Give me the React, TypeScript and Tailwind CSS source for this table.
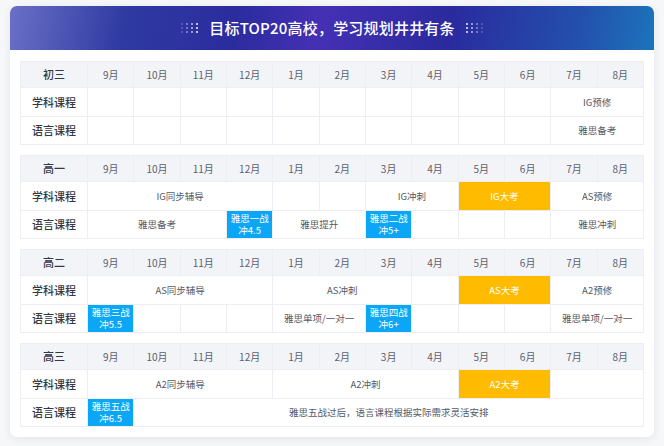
type Cell = { span: number; text?: string; kind?: "blue" | "orange" }

type Block = {
  grade: string
  subject: Cell[]
  language: Cell[]
}

const months = ["9月", "10月", "11月", "12月", "1月", "2月", "3月", "4月", "5月", "6月", "7月", "8月"]

const empty = (n: number): Cell[] => Array.from({ length: n }, () => ({ span: 1 }))

const blocks: Block[] = [
  {
    grade: "初三",
    subject: [...empty(10), { span: 2, text: "IG预修" }],
    language: [...empty(10), { span: 2, text: "雅思备考" }],
  },
  {
    grade: "高一",
    subject: [
      { span: 4, text: "IG同步辅导" },
      ...empty(2),
      { span: 2, text: "IG冲刺" },
      { span: 2, text: "IG大考", kind: "orange" },
      { span: 2, text: "AS预修" },
    ],
    language: [
      { span: 3, text: "雅思备考" },
      { span: 1, text: "雅思一战\n冲4.5", kind: "blue" },
      { span: 2, text: "雅思提升" },
      { span: 1, text: "雅思二战\n冲5+", kind: "blue" },
      ...empty(3),
      { span: 2, text: "雅思冲刺" },
    ],
  },
  {
    grade: "高二",
    subject: [
      { span: 4, text: "AS同步辅导" },
      { span: 3, text: "AS冲刺" },
      ...empty(1),
      { span: 2, text: "AS大考", kind: "orange" },
      { span: 2, text: "A2预修" },
    ],
    language: [
      { span: 1, text: "雅思三战\n冲5.5", kind: "blue" },
      ...empty(3),
      { span: 2, text: "雅思单项/一对一" },
      { span: 1, text: "雅思四战\n冲6+", kind: "blue" },
      ...empty(3),
      { span: 2, text: "雅思单项/一对一" },
    ],
  },
  {
    grade: "高三",
    subject: [
      { span: 4, text: "A2同步辅导" },
      { span: 4, text: "A2冲刺" },
      { span: 2, text: "A2大考", kind: "orange" },
      { span: 2 },
    ],
    language: [
      { span: 1, text: "雅思五战\n冲6.5", kind: "blue" },
      { span: 11, text: "雅思五战过后，语言课程根据实际需求灵活安排" },
    ],
  },
]

const Dots = ({ fade }: { fade: "left" | "right" }) => {
  const cols = fade === "left" ? [0.25, 0.45, 0.7, 0.95] : [0.95, 0.7, 0.45, 0.25]
  return (
    <div className="grid grid-cols-4 gap-x-[3px] gap-y-[2px]">
      {[0, 1, 2].map((r) =>
        cols.map((o, c) => (
          <span key={`${r}-${c}`} className="block h-[2px] w-[2px] rounded-full bg-white" style={{ opacity: o }} />
        ))
      )}
    </div>
  )
}

const cellClass = (kind?: "blue" | "orange") => {
  if (kind === "blue") return "bg-[#0ba6f6] text-white"
  if (kind === "orange") return "bg-[#ffbb00] text-white"
  return "text-[#555a66]"
}

const Row = ({ label, cells }: { label: string; cells: Cell[] }) => (
  <tr className="h-[28.5px]">
    <td className="border border-[#eceef3] text-center text-[11px] font-medium text-[#333845]">{label}</td>
    {cells.map((c, i) => (
      <td
        key={i}
        colSpan={c.span}
        className={`border border-[#eceef3] whitespace-pre-line text-center text-[9.5px] leading-[12px] ${cellClass(c.kind)}`}
      >
        {c.text}
      </td>
    ))}
  </tr>
)

const GradeTable = ({ block }: { block: Block }) => (
  <table className="w-full table-fixed border-collapse">
    <colgroup>
      <col className="w-[67px]" />
      {months.map((m) => (
        <col key={m} />
      ))}
    </colgroup>
    <thead>
      <tr className="h-[26px] bg-[#f3f4f8]">
        <th className="border border-[#eceef3] text-[11px] font-medium text-[#333845]">{block.grade}</th>
        {months.map((m) => (
          <th key={m} className="border border-[#eceef3] text-[10px] font-normal text-[#5b606c]">
            {m}
          </th>
        ))}
      </tr>
    </thead>
    <tbody>
      <Row label="学科课程" cells={block.subject} />
      <Row label="语言课程" cells={block.language} />
    </tbody>
  </table>
)

export default function App() {
  return (
    <div
      className="min-h-[446px] w-[664px] bg-[#f6f7f9] px-[10px] pt-[6px] pb-[9px]"
      style={{ fontFamily: '"Noto Sans CJK SC", "Noto Sans", sans-serif' }}
    >
      <div className="overflow-hidden rounded-[7px] bg-white shadow-[0_2px_8px_rgba(30,40,80,0.08)]">
        {/* banner */}
        <div className="flex h-[44px] items-center justify-center gap-[11px] bg-[linear-gradient(100deg,#6a70c6_0%,#2f3aa2_18%,#2b2c9e_35%,#4530b4_48%,#2a2a9e_68%,#2350ad_88%,#1c74bb_100%)]">
          <Dots fade="left" />
          <h1 className="text-[15px] font-medium tracking-[0.2px] text-white">目标TOP20高校，学习规划井井有条</h1>
          <Dots fade="right" />
        </div>

        <div className="flex flex-col gap-[10px] px-[10px] pt-[11px] pb-[10px]">
          {blocks.map((b) => (
            <GradeTable key={b.grade} block={b} />
          ))}
        </div>
      </div>
    </div>
  )
}
